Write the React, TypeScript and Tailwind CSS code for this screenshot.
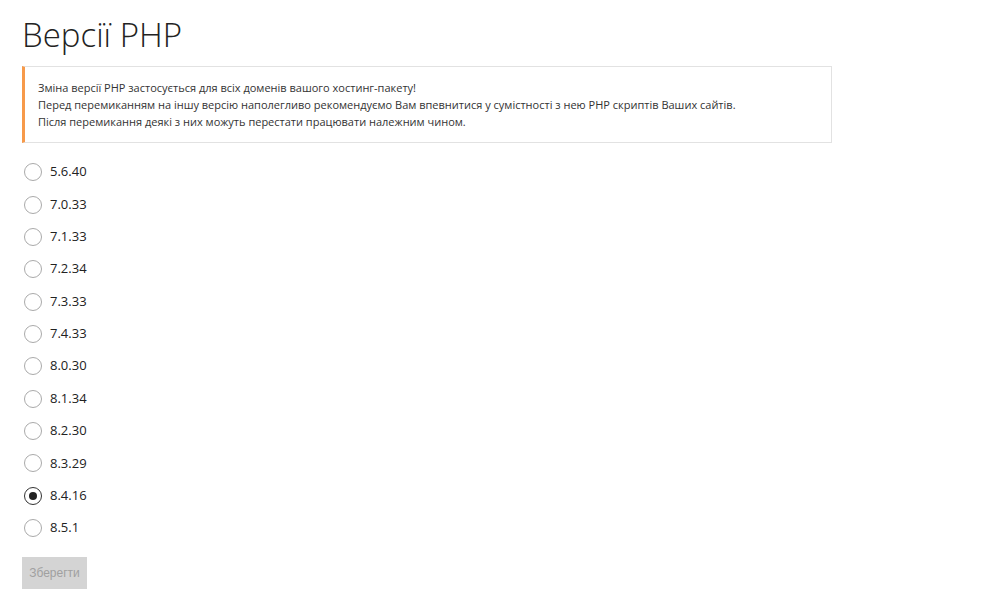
import React, { useState } from "react";

const versions = [
  "5.6.40",
  "7.0.33",
  "7.1.33",
  "7.2.34",
  "7.3.33",
  "7.4.33",
  "8.0.30",
  "8.1.34",
  "8.2.30",
  "8.3.29",
  "8.4.16",
  "8.5.1",
];

export default function App() {
  const [selected, setSelected] = useState("8.4.16");
  return (
    <div
      className="min-h-[612px] w-full bg-white pl-[22px] pt-[13px] text-[#333]"
      style={{ fontFamily: '"Open Sans", "Noto Sans", sans-serif' }}
    >
      <h1 className="text-[33px] font-light leading-[44px] text-[#222]">Версії PHP</h1>
      <div className="mt-[9px] w-[810px] border border-l-[3px] border-[#e2e2e2] border-l-[#f79a4a] py-[12px] pl-[13px] text-[11px] leading-[17px] text-[#333]">
        <p>Зміна версії PHP застосується для всіх доменів вашого хостинг-пакету!</p>
        <p>
          Перед перемиканням на іншу версію наполегливо рекомендуємо Вам впевнитися у сумістності з нею PHP
          скриптів Ваших сайтів.
        </p>
        <p>Після перемикання деякі з них можуть перестати працювати належним чином.</p>
      </div>
      <div className="mt-[13px] flex flex-col">
        {versions.map((v) => (
          <label
            key={v}
            className="flex h-[32.35px] cursor-pointer items-center gap-[8px] pl-[2px]"
            onClick={() => setSelected(v)}
          >
            <span
              className={
                "flex h-[18px] w-[18px] items-center justify-center rounded-full border bg-white " +
                (selected === v ? "border-[#333] border-[1.5px]" : "border-[#aaa]")
              }
            >
              {selected === v && <span className="h-[8px] w-[8px] rounded-full bg-[#222]" />}
            </span>
            <span className="text-[13px] text-[#222]">{v}</span>
          </label>
        ))}
      </div>
      <button
        className="mt-[13px] h-[32px] w-[65px] bg-[#d4d4d4] text-[12px] text-[#a0a0a0]"
        style={{ fontFamily: '"Liberation Sans", Arial, sans-serif' }}
        disabled
      >
        Зберегти
      </button>
    </div>
  );
}
